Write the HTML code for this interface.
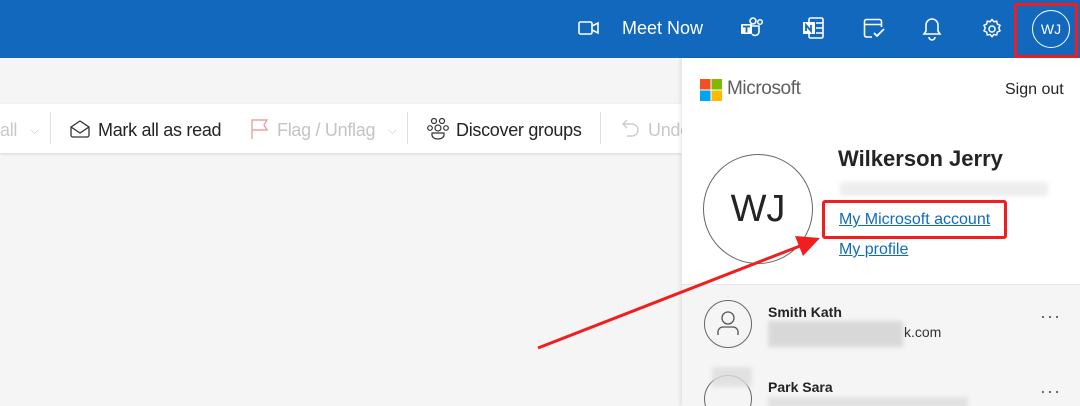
<!DOCTYPE html>
<html><head><meta charset="utf-8"><style>
*{margin:0;padding:0;box-sizing:border-box}
html,body{width:1080px;height:406px;overflow:hidden}
body{background:#f5f5f5;font-family:"Liberation Sans",sans-serif;position:relative}
.hdr{position:absolute;left:0;top:0;width:1080px;height:58px;background:#1168bd}
.abs{position:absolute}
.tb{position:absolute;left:0;top:104px;width:682px;height:49px;background:#fff;box-shadow:0 1px 3px rgba(0,0,0,.12)}
.tb span{position:absolute;top:16px;font-size:18px;color:#242424;letter-spacing:-0.3px}
.sep{position:absolute;top:8px;width:1px;height:32px;background:#e0e0e0}
.panel{position:absolute;left:682px;top:58px;width:398px;height:348px;background:#fff;box-shadow:-2px 0 4px rgba(0,0,0,.08);overflow:hidden}
.list{position:absolute;left:0;top:226px;width:398px;height:122px;background:#f5f5f5;border-top:1px solid #e6e6e6;overflow:hidden}
.blur{position:absolute;background:#ddd;filter:blur(2px);opacity:.8}
.lnk{color:#0f6cbd;text-decoration:underline}
</style></head><body>
<div class="hdr">
 <svg class="abs" style="left:578px;top:20px" width="22" height="16" viewBox="0 0 22 16"><rect x="1" y="2" width="13" height="12" rx="1.5" fill="none" stroke="#fff" stroke-width="1.6"/><path d="M14 6 L20 3 V13 L14 10" fill="none" stroke="#fff" stroke-width="1.6"/></svg>
 <div class="abs" style="left:622px;top:18px;color:#fff;font-size:18px">Meet Now</div>
 <svg class="abs" style="left:740px;top:17px" width="24" height="22" viewBox="0 0 24 22"><circle cx="13" cy="4" r="3" fill="none" stroke="#fff" stroke-width="1.6"/><circle cx="20" cy="5" r="2.3" fill="none" stroke="#fff" stroke-width="1.5"/><rect x="1" y="7" width="11" height="10" rx="1" fill="#fff"/><path d="M12 9h7v6a4 4 0 0 1-7 2" fill="none" stroke="#fff" stroke-width="1.6"/><path d="M3 9.5h7M6.5 9.5v6" stroke="#1168bd" stroke-width="1.8"/></svg>
 <svg class="abs" style="left:802px;top:17px" width="22" height="22" viewBox="0 0 22 22"><rect x="7" y="1" width="14" height="20" rx="1.5" fill="none" stroke="#fff" stroke-width="1.6"/><path d="M14 6h7M14 11h7M14 16h7" stroke="#fff" stroke-width="1.4"/><rect x="1" y="5" width="12" height="12" fill="#fff"/><path d="M4 14V8l5 6V8" fill="none" stroke="#1168bd" stroke-width="1.8"/></svg>
 <svg class="abs" style="left:863px;top:18px" width="22" height="22" viewBox="0 0 22 22"><path d="M9 19H3.5A2 2 0 0 1 1.5 17V3.5A2 2 0 0 1 3.5 1.5H16.5A2 2 0 0 1 18.5 3.5V9M1.5 6.5H18.5" fill="none" stroke="#fff" stroke-width="1.6"/><path d="M11 15l3 3 7-7" fill="none" stroke="#fff" stroke-width="1.8"/></svg>
 <svg class="abs" style="left:922px;top:17px" width="20" height="24" viewBox="0 0 20 24"><path d="M10 2a6 6 0 0 1 6 6v6l2 3H2l2-3V8a6 6 0 0 1 6-6z" fill="none" stroke="#fff" stroke-width="1.6"/><path d="M7 20a3 3 0 0 0 6 0" fill="none" stroke="#fff" stroke-width="1.6"/></svg>
 <svg class="abs" style="left:981px;top:18px" width="22" height="22" viewBox="0 0 24 24"><path d="M12 1.5l2 2.6 3.2-.7.6 3.2 3 1.4-1.4 3 1.4 3-3 1.4-.6 3.2-3.2-.7-2 2.6-2-2.6-3.2.7-.6-3.2-3-1.4 1.4-3-1.4-3 3-1.4.6-3.2 3.2.7z" fill="none" stroke="#fff" stroke-width="1.6" stroke-linejoin="round"/><circle cx="12" cy="12" r="3.3" fill="none" stroke="#fff" stroke-width="1.6"/></svg>
 <div class="abs" style="left:1032px;top:10px;width:38px;height:38px;border:1.3px solid #fff;border-radius:50%;color:#fff;font-size:14px;text-align:center;line-height:36px">WJ</div>
 <div class="abs" style="left:1014px;top:3px;width:64px;height:55px;border:3px solid #f01e1e;border-radius:2px"></div>
</div>
<div class="tb">
 <span style="left:0;color:#c8c8c8">all</span><span style="left:30px;color:#ccc;font-size:12px;top:19px">⌵</span>
 <div class="sep" style="left:50px"></div>
 <svg class="abs" style="left:69px;top:15px" width="22" height="20" viewBox="0 0 22 20"><path d="M2 8l9-6 9 6v8a2 2 0 0 1-2 2H4a2 2 0 0 1-2-2z" fill="none" stroke="#333" stroke-width="1.3"/><path d="M2 8l9 6 9-6" fill="none" stroke="#333" stroke-width="1.3"/></svg>
 <span style="left:98px">Mark all as read</span>
 <svg class="abs" style="left:250px;top:14px" width="20" height="22" viewBox="0 0 20 22"><path d="M2 21V2h15l-3 5 3 5H2" fill="none" stroke="#e7a2a6" stroke-width="1.4"/></svg>
 <span style="left:277px;color:#c4c4c4">Flag / Unflag</span><span style="left:388px;color:#ccc;font-size:12px;top:19px">⌵</span>
 <div class="sep" style="left:407px"></div>
 <svg class="abs" style="left:426px;top:13px" width="24" height="24" viewBox="0 0 24 24"><circle cx="8" cy="4" r="2.5" fill="none" stroke="#333" stroke-width="1.2"/><circle cx="16" cy="4" r="2.5" fill="none" stroke="#333" stroke-width="1.2"/><circle cx="4" cy="11" r="2.3" fill="none" stroke="#333" stroke-width="1.2"/><circle cx="20" cy="11" r="2.3" fill="none" stroke="#333" stroke-width="1.2"/><circle cx="12" cy="11" r="3" fill="none" stroke="#333" stroke-width="1.2"/><path d="M6 16h12v2a6 4 0 0 1-12 0z" fill="none" stroke="#333" stroke-width="1.2"/></svg>
 <span style="left:456px">Discover groups</span>
 <div class="sep" style="left:600px"></div>
 <svg class="abs" style="left:621px;top:14px" width="20" height="22" viewBox="0 0 20 22"><path d="M6 2L2 6l4 4M2 6h9a6 6 0 0 1 0 12H6" fill="none" stroke="#ccc" stroke-width="1.4"/></svg>
 <span style="left:648px;color:#c8c8c8">Undo</span>
</div>
<div class="panel">
 <svg class="abs" style="left:18px;top:21px" width="22" height="22" viewBox="0 0 22 22"><rect width="10.5" height="10.5" fill="#f25022"/><rect x="11.5" width="10.5" height="10.5" fill="#7fba00"/><rect y="11.5" width="10.5" height="10.5" fill="#00a4ef"/><rect x="11.5" y="11.5" width="10.5" height="10.5" fill="#ffb900"/></svg>
 <div class="abs" style="left:45px;top:20px;font-size:19px;color:#5e5e5e;letter-spacing:-0.4px">Microsoft</div>
 <div class="abs" style="left:323px;top:23px;font-size:16px;color:#242424">Sign out</div>
 <div class="abs" style="left:21px;top:96px;width:110px;height:110px;border:1px solid #666;border-radius:50%;text-align:center;line-height:108px;font-size:38px;color:#242424">WJ</div>
 <div class="abs" style="left:156px;top:88px;font-size:22px;font-weight:bold;color:#242424">Wilkerson Jerry</div>
 <div class="blur" style="left:158px;top:124px;width:208px;height:14px;opacity:.5"></div>
 <div class="abs lnk" style="left:157px;top:153px;font-size:16px">My Microsoft account</div>
 <div class="abs" style="left:140px;top:142px;width:185px;height:39px;border:3px solid #f01e1e;border-radius:3px"></div>
 <div class="abs lnk" style="left:157px;top:183px;font-size:16px">My profile</div>
 <div class="list">
  <div class="abs" style="left:22px;top:15px;width:48px;height:48px;border:1px solid #666;border-radius:50%"></div>
  <svg class="abs" style="left:34px;top:25px" width="24" height="26" viewBox="0 0 24 26"><circle cx="12" cy="8" r="6" fill="none" stroke="#555" stroke-width="1.3"/><path d="M2 25v-3a5 5 0 0 1 5-5h10a5 5 0 0 1 5 5v3" fill="none" stroke="#555" stroke-width="1.3"/></svg>
  <div class="abs" style="left:86px;top:19px;font-size:14px;font-weight:bold;color:#242424">Smith Kath</div>
  <div class="blur" style="left:86px;top:36px;width:135px;height:26px;background:#d2d2d2"></div>
  <div class="abs" style="left:222px;top:39px;font-size:14px;color:#333">k.com</div>
  <div class="abs" style="left:358px;top:21px;font-size:18px;color:#555;letter-spacing:1px">···</div>
  <div class="abs" style="left:22px;top:90px;width:48px;height:48px;border:1px solid #666;border-radius:50%"></div>
  <div class="blur" style="left:30px;top:82px;width:40px;height:20px"></div>
  <div class="abs" style="left:86px;top:94px;font-size:14px;font-weight:bold;color:#242424">Park Sara</div>
  <div class="blur" style="left:86px;top:112px;width:200px;height:12px"></div>
  <div class="abs" style="left:358px;top:96px;font-size:18px;color:#555;letter-spacing:1px">···</div>
 </div>
</div>
<svg class="abs" style="left:0;top:0" width="1080" height="406"><line x1="538" y1="348" x2="800" y2="246" stroke="#f01e1e" stroke-width="3"/><polygon points="820,238 795,236 803,256" fill="#f01e1e"/></svg>
</body></html>
